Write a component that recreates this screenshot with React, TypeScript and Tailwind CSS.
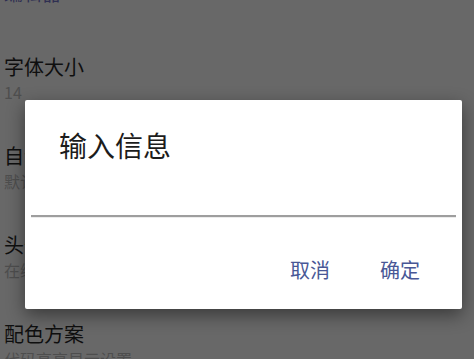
const rows = [
  { title: "字体大小", summary: "14" },
  { title: "自动换行", summary: "默认不自动换行" },
  { title: "头部信息", summary: "在编辑器顶部显示文件信息" },
  { title: "配色方案", summary: "代码高亮显示设置" },
];

const font = { fontFamily: '"Noto Sans CJK SC", "Noto Sans", sans-serif' };

export default function App() {
  return (
    <div className="relative h-[359px] w-[474px] overflow-hidden bg-[#686868]" style={font}>
      {/* preference list, dimmed behind the dialog */}
      <div className="-mt-[21px] mb-[26px] pl-[4px] text-[19px] leading-[28px] text-[#2f2f52]">编辑器</div>
      {rows.map((row) => (
        <div key={row.title} className="pl-[4px] pt-[20px] pb-[19px]">
          <div className="text-[20px] leading-[28px] text-[#0f0f0f]">{row.title}</div>
          <div className="text-[16px] leading-[22px] text-[#4e4e4e]">{row.summary}</div>
        </div>
      ))}

      {/* dialog */}
      <div className="absolute left-[25px] top-[100px] flex h-[209px] w-[437px] flex-col rounded-[2px] bg-white shadow-[0_6px_18px_rgba(0,0,0,0.45)]">
        <div className="pl-[34px] pt-[27px] text-[28px] leading-[36px] text-[#1c1c1c]">输入信息</div>
        <div className="mx-[6px]">
          <input className="block h-[54px] w-full border-b-2 border-[#9e9e9e] bg-transparent outline-none" />
          <div className="h-px bg-[#ececec]" />
        </div>
        <div className="mt-[38px] flex justify-end gap-[8px] pr-[21px]">
          <button className="px-[21px] text-[20px] leading-[28px] text-[#485796]">取消</button>
          <button className="px-[21px] text-[20px] leading-[28px] text-[#485796]">确定</button>
        </div>
      </div>
    </div>
  );
}
